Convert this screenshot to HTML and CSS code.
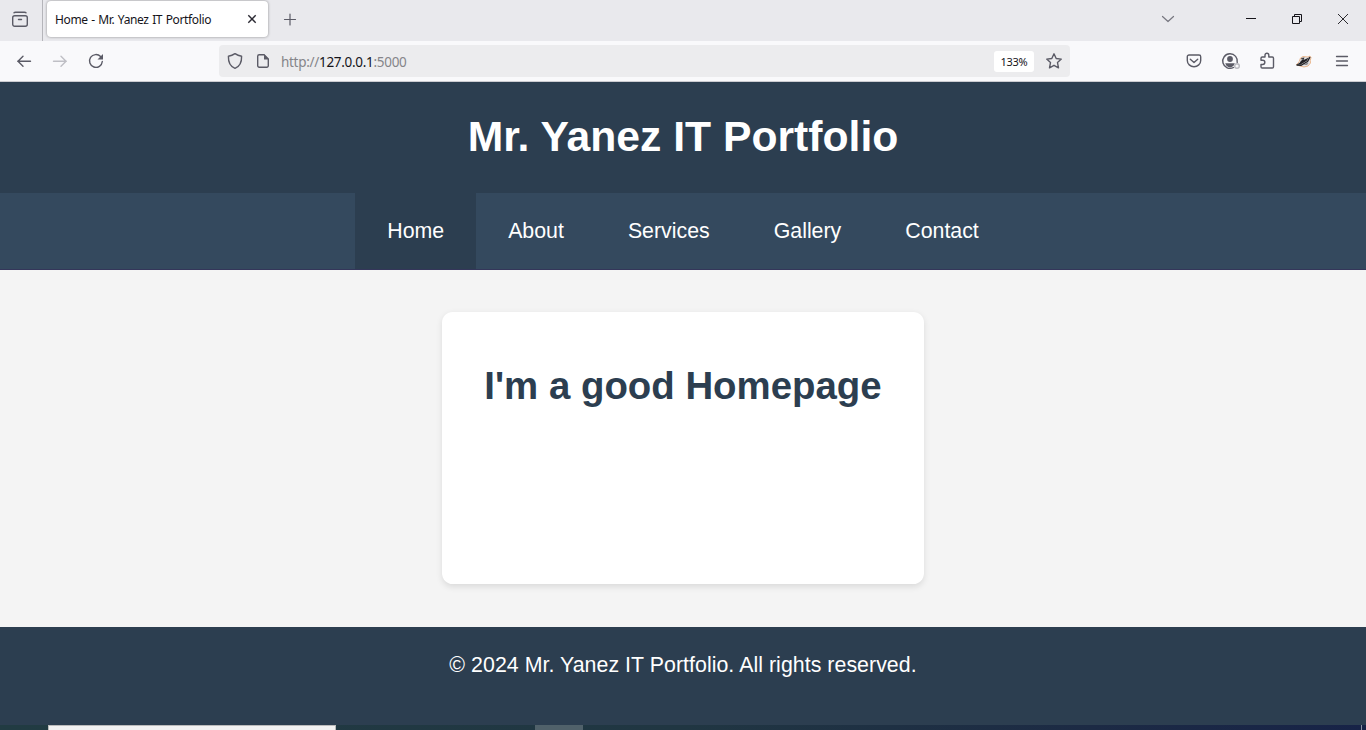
FILE: index.html
```html
<!DOCTYPE html>
<html lang="en">
<head>
<meta charset="utf-8">
<title>Home - Mr. Yanez IT Portfolio</title>
<link rel="stylesheet" href="styles.css">
</head>
<body>
<div class="tabbar">
  <div class="view"><svg class="ic" width="18" height="18" viewBox="0 0 18 18"><rect x="1.7" y="5.7" width="14.6" height="10.6" rx="2"/><path d="M3 2.700Q3.500 2.200 4.500 2.200H13.500Q14.500 2.200 15 2.700M7.500 9.500h3"/></svg></div>
  <div class="tab"><span class="tab-title">Home - Mr. Yanez IT Portfolio</span><svg class="close" width="10" height="10" viewBox="0 0 10 10"><path d="M1.300 1.300l7.400 7.400M8.700 1.300L1.300 8.700"/></svg></div>
  <svg class="ic plus" width="14" height="14" viewBox="0 0 14 14"><path d="M1.500 7.500h11M7 2v11"/></svg>
  <div class="window-controls">
    <svg class="ic soft" width="14" height="14" viewBox="0 0 14 14"><path d="M1.500 4.500L7 9.500l5.500-5"/></svg>
    <svg class="win" width="12" height="12" viewBox="0 0 12 12"><path d="M1 5.500h10"/></svg>
    <svg class="win" width="12" height="12" viewBox="0 0 12 12"><path d="M1.500 3.500h7v7h-7zM3.500 3.500v-2h7v7h-2"/></svg>
    <svg class="win thin" width="12" height="12" viewBox="0 0 12 12"><path d="M1 1l10 10M11 1L1 11"/></svg>
  </div>
</div>
<div class="toolbar">
  <div class="history">
    <svg class="ic" width="16" height="16" viewBox="0 0 16 16"><path d="M14.500 8.300H1.700M7 3.300l-5 5 5 5"/></svg>
    <svg class="ic off" width="16" height="16" viewBox="0 0 16 16"><path d="M1.500 8.300h12.800M9 3.300l5 5-5 5"/></svg>
    <svg class="ic" width="16" height="16" viewBox="0 0 16 16"><path d="M14.300 8.500A6.400 6.400 0 1 1 12.600 3.600"/><path class="fill" d="M15 1v5.500h-5.500z"/></svg>
  </div>
  <div class="urlbar">
    <svg class="ic" width="16" height="18" viewBox="0 0 16 18"><path d="M8 1.600C10 3 12 3.800 14.600 4.200 14.800 10 12.500 14.500 8 16.300 3.500 14.500 1.200 10 1.400 4.200 4 3.800 6 3 8 1.600z"/></svg>
    <svg class="ic page" width="14" height="16" viewBox="0 0 14 16"><path d="M8 1.700H3.200a1.500 1.500 0 0 0-1.500 1.500v9.600a1.500 1.500 0 0 0 1.500 1.500h7.600a1.500 1.500 0 0 0 1.500-1.500V6z"/><path class="fill" d="M8 1v5.500h5z"/></svg>
    <span class="url">http://<b>127.0.0.1</b>:5000</span>
    <span class="zoom">133%</span>
    <svg class="ic" width="18" height="18" viewBox="0 0 18 18"><path d="M9 1.800l2.200 4.700 5.100.6-3.800 3.500 1 5.200L9 13.300l-4.500 2.500 1-5.200L1.700 7.100l5.100-.6z"/></svg>
  </div>
  <div class="actions">
    <svg class="ic" width="18" height="18" viewBox="0 0 18 18"><path d="M4 3h10a1.700 1.700 0 0 1 1.700 1.700V8.500a6.700 6.200 0 0 1-13.400 0V4.700A1.700 1.700 0 0 1 4 3zM5.300 7.200L9 10.500l3.700-3.300"/></svg>
    <svg class="ic" width="20" height="18" viewBox="0 0 20 18"><path d="M16.200 10.500A7.300 7.300 0 1 0 12.500 15.500"/><circle class="fill" cx="9" cy="7" r="2.900"/><path class="fill" d="M4.200 11.200h9.600l-1.300 2.600q-3.500 3.200-7 0z"/><circle class="badge" cx="16" cy="14" r="2.300"/></svg>
    <svg class="ic puzzle" width="18" height="18" viewBox="0 0 18 18"><path d="M3 8.200V6.200a1.200 1.200 0 0 1 1.200-1.200H7V3.200a1.900 1.900 0 0 1 3.800 0V5h3.500a1.200 1.200 0 0 1 1.200 1.200v8.600a1.200 1.200 0 0 1-1.200 1.200H4.200A1.200 1.200 0 0 1 3 14.800V12.500h1.700a2.100 2.100 0 0 0 0-4.300z"/></svg>
    <svg width="18" height="16" viewBox="0 0 18 16"><path d="M1.500 11.500L4 9l1.500-4L8 3.500l5 .5 2-1 1 1.500-.7 3L15.500 10 13 13l-4 1-4-1z" fill="#e4e4e6" stroke="#e8a066" stroke-width=".7"/><path d="M1.500 11.700L5 9.500 6.500 5l3-.5L8.500 7l5.500-2.500L11.500 8 5.500 11.500z" fill="#222226"/><path d="M1.500 12l4.500.3 6.500-3.800 2.500-4.500" stroke="#222226" stroke-width="1.400"/><path d="M5 8.500l2.500-2.700" stroke="#fff"/><path d="M8.500 12l3.500-2.500 1.700.3L12 12z" fill="#8d8d91"/></svg>
    <svg class="ic menu" width="14" height="14" viewBox="0 0 14 14"><path d="M1.500 2.500h11M1.500 7h11M1.500 11.500h11"/></svg>
  </div>
</div>
<header class="site-header"><h1>Mr. Yanez IT Portfolio</h1></header>
<nav class="site-nav"><a class="active">Home</a><a>About</a><a>Services</a><a>Gallery</a><a>Contact</a></nav>
<main class="content"><section class="card"><h2>I'm a good Homepage</h2></section></main>
<footer class="site-footer">© 2024 Mr. Yanez IT Portfolio. All rights reserved.</footer>
<div class="taskbar"><div class="search"></div><div class="app"></div><div class="desktop"></div></div>
</body>
</html>
```
FILE: styles.css
```css
* { box-sizing: border-box; }
body { margin: 0; height: 730px; overflow: hidden; display: flex; flex-direction: column; font: 21.333px "Liberation Sans", Arial, sans-serif; background: #f4f4f4; }
svg { display: block; flex: none; fill: none; }
.ic { stroke: #5b5b66; stroke-width: 1.4; stroke-linecap: round; stroke-linejoin: round; }
.fill { fill: #5b5b66; stroke: none; }
.off { stroke: #bfbfc5; }
.soft { stroke: #777780; }
.badge { fill: #f9f9fb; stroke: #b9b9bf; }
.tabbar { height: 41px; flex: none; display: flex; background: #e9e9ed; font-family: "Noto Sans", sans-serif; }
.view { width: 43px; padding: 10px 0 0 11px; border-right: 1px solid #b5b5ba; }
.tab { width: 221px; height: 36px; margin: 1px 0 0 4px; padding: 0 11px 0 8px; display: flex; align-items: center; justify-content: space-between; background: #fff; border-radius: 4px; box-shadow: 0 0 3px rgba(0,0,0,.4); color: #15141a; }
.tab-title { font-size: 12px; letter-spacing: -.37px; word-spacing: .8px; white-space: nowrap; }
.close { stroke: #2b2a33; stroke-width: 1.4; }
.plus { margin: 12px 0 0 15px; stroke-width: 1.2; }
.window-controls { margin-left: auto; padding: 13px 17px 0 0; display: flex; gap: 34px; }
.window-controls .soft { margin-right: 36px; margin-top: -1px; stroke-width: 1.2; }
.win { stroke: #15141a; stroke-width: 1; }
.thin { stroke-width: .9; }
.toolbar { height: 41px; flex: none; display: flex; background: #f9f9fb; border-bottom: 1px solid #ccccd1; font-family: "Noto Sans", sans-serif; }
.history { width: 219px; padding: 12px 0 0 16px; display: flex; gap: 20px; }
.urlbar { width: 851px; height: 32px; margin-top: 4px; padding: 0 7px 0 8px; display: flex; align-items: center; background: #ececee; border-radius: 4px; }
.page { margin-left: 13px; }
.url { margin-left: 11px; padding-top: 2px; font-size: 13.5px; letter-spacing: -.3px; color: #858589; }
.url b { font-weight: 400; color: #15141a; }
.zoom { width: 40px; height: 21px; margin: 0 11px 0 auto; border-radius: 3px; background: #fff; color: #15141a; font-size: 11px; letter-spacing: -.25px; line-height: 21px; text-align: center; }
.actions { margin-left: auto; padding-right: 17px; display: flex; align-items: center; gap: 18px; }
.puzzle { margin: 0 1px 0 -1px; }
.menu { margin-left: 4px; stroke-width: 1.3; }
.site-header { height: 111px; flex: none; padding-bottom: 2px; display: flex; align-items: center; justify-content: center; background: #2c3e50; color: #fff; }
h1 { margin: 0; font-size: 42.667px; }
.site-nav { height: 77px; flex: none; display: flex; justify-content: center; background: #34495e; border-bottom: 1px solid #34365a; color: #fff; }
.site-nav a { padding: 0 32px; line-height: 76px; }
.active { background: #2c3e50; }
.content { flex: 1; display: flex; justify-content: center; padding: 42px 0 43px; }
.card { width: 482px; padding-top: 52px; background: #fff; border-radius: 10.667px; box-shadow: 0 2.667px 6.667px rgba(0,0,0,.1); color: #2c3e50; text-align: center; }
h2 { margin: 0; font-size: 38.4px; line-height: 43px; white-space: nowrap; }
.site-footer { height: 98px; flex: none; padding-top: 26px; line-height: 24px; letter-spacing: .045px; background: #2c3e50; color: #fff; text-align: center; }
.taskbar { height: 5px; flex: none; display: flex; background: linear-gradient(90deg, #213b42, #203642 50%, #1c2a44 80%, #172347); }
.search { width: 288px; margin-left: 48px; background: #f2f2f2; border: 1px solid #bbb; border-bottom: 0; }
.app { width: 48px; margin-left: 199px; background: #50616a; }
.desktop { width: 1px; margin: 0 4px 0 auto; background: #8b91a2; }
```
